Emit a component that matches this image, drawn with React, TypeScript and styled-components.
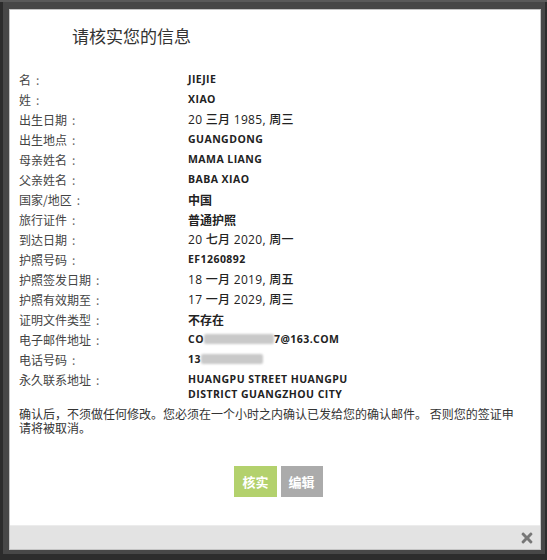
import styled, { createGlobalStyle } from "styled-components";
import { FaTimes } from "react-icons/fa";

const GlobalStyle = createGlobalStyle`
  html, body {
    margin: 0;
    padding: 0;
    background: #2c2c2c;
  }
  body {
    border-top: 2px solid #5a5a5a;
    font-family: "Noto Sans CJK SC", "Noto Sans", sans-serif;
    color: #333;
  }
`;

const Frame = styled.div`
  width: 542px;
  margin-left: 3px;
  box-sizing: border-box;
  padding: 7px 4px 4px 6px;
  background: #474747;
`;

const Modal = styled.div`
  height: 541px;
  box-sizing: border-box;
  border: 1px solid #c4c4c4;
  background: #fff;
  display: flex;
  flex-direction: column;
`;

const Body = styled.div`
  flex: 1;
  padding: 14px 9px 0 9px;
  display: flex;
  flex-direction: column;
`;

const Title = styled.h1`
  margin: 0 0 21px 53px;
  font-size: 17px;
  line-height: 24px;
  font-weight: 400;
  color: #333;
`;

const Row = styled.div`
  display: grid;
  grid-template-columns: 169px 172px;
  padding: 2.5px 0;
  line-height: 15px;
`;

const Label = styled.div`
  font-size: 12px;
  color: #444;
`;

const Colon = styled.span`
  margin-left: 5px;
  color: #666;
`;

const Value = styled.div<{ $kind: "latin" | "date" | "cjk" }>`
  color: #222;
  font-size: ${(p) => (p.$kind === "latin" ? "10.5px" : "12px")};
  font-weight: ${(p) => (p.$kind === "date" ? 500 : 700)};
  letter-spacing: ${(p) =>
    p.$kind === "latin" ? "0.45px" : p.$kind === "date" ? "0.3px" : "0"};
  font-family: ${(p) =>
    p.$kind === "cjk"
      ? `"Noto Sans CJK SC", sans-serif`
      : `"Open Sans", "Noto Sans CJK SC", sans-serif`};
`;

const Redact = styled.span<{ $w: number }>`
  display: inline-block;
  width: ${(p) => p.$w}px;
  height: 10px;
  vertical-align: -1px;
  background: #c9c9c9;
  border-radius: 2px;
  filter: blur(0.8px);
`;

const Notice = styled.p`
  margin: 3px 0 0 0;
  max-width: 495px;
  font-size: 12px;
  line-height: 13.5px;
  color: #333;
`;

const Actions = styled.div`
  display: flex;
  justify-content: center;
  gap: 4px;
  padding-left: 7px;
  margin-top: 32px;
`;

const Button = styled.button<{ $primary?: boolean }>`
  height: 31px;
  padding: 0 8px;
  border: none;
  border-radius: 0;
  background: ${(p) => (p.$primary ? "#b3d16d" : "#ababab")};
  color: #fff;
  font-family: "Noto Sans CJK SC", sans-serif;
  font-size: 13px;
  font-weight: 700;
  cursor: pointer;
`;

const Footer = styled.div`
  height: 23px;
  border-top: 1px solid #ececec;
  background: #e3e3e3;
  display: flex;
  justify-content: flex-end;
  align-items: center;
  padding-right: 5px;
  color: #777;
`;

type Item = { label: string; value: React.ReactNode; kind: "latin" | "date" | "cjk" };

const items: Item[] = [
  { label: "名", value: "JIEJIE", kind: "latin" },
  { label: "姓", value: "XIAO", kind: "latin" },
  { label: "出生日期", value: "20 三月 1985, 周三", kind: "date" },
  { label: "出生地点", value: "GUANGDONG", kind: "latin" },
  { label: "母亲姓名", value: "MAMA LIANG", kind: "latin" },
  { label: "父亲姓名", value: "BABA XIAO", kind: "latin" },
  { label: "国家/地区", value: "中国", kind: "cjk" },
  { label: "旅行证件", value: "普通护照", kind: "cjk" },
  { label: "到达日期", value: "20 七月 2020, 周一", kind: "date" },
  { label: "护照号码", value: "EF1260892", kind: "latin" },
  { label: "护照签发日期", value: "18 一月 2019, 周五", kind: "date" },
  { label: "护照有效期至", value: "17 一月 2029, 周三", kind: "date" },
  { label: "证明文件类型", value: "不存在", kind: "cjk" },
  {
    label: "电子邮件地址",
    value: (
      <>
        CO<Redact $w={70} />7@163.COM
      </>
    ),
    kind: "latin",
  },
  {
    label: "电话号码",
    value: (
      <>
        13<Redact $w={62} />
      </>
    ),
    kind: "latin",
  },
  {
    label: "永久联系地址",
    value: "HUANGPU STREET HUANGPU DISTRICT GUANGZHOU CITY",
    kind: "latin",
  },
];

const App = () => {
  return (
    <>
      <GlobalStyle />
      <Frame>
        <Modal>
          <Body>
            <Title>请核实您的信息</Title>
            {items.map((item) => (
              <Row key={item.label}>
                <Label>
                  {item.label}
                  <Colon>:</Colon>
                </Label>
                <Value $kind={item.kind}>{item.value}</Value>
              </Row>
            ))}
            <Notice>
              确认后，不须做任何修改。您必须在一个小时之内确认已发给您的确认邮件。 否则您的签证申请将被取消。
            </Notice>
            <Actions>
              <Button $primary>核实</Button>
              <Button>编辑</Button>
            </Actions>
          </Body>
          <Footer>
            <FaTimes size={16} />
          </Footer>
        </Modal>
      </Frame>
    </>
  );
};

export default App;
